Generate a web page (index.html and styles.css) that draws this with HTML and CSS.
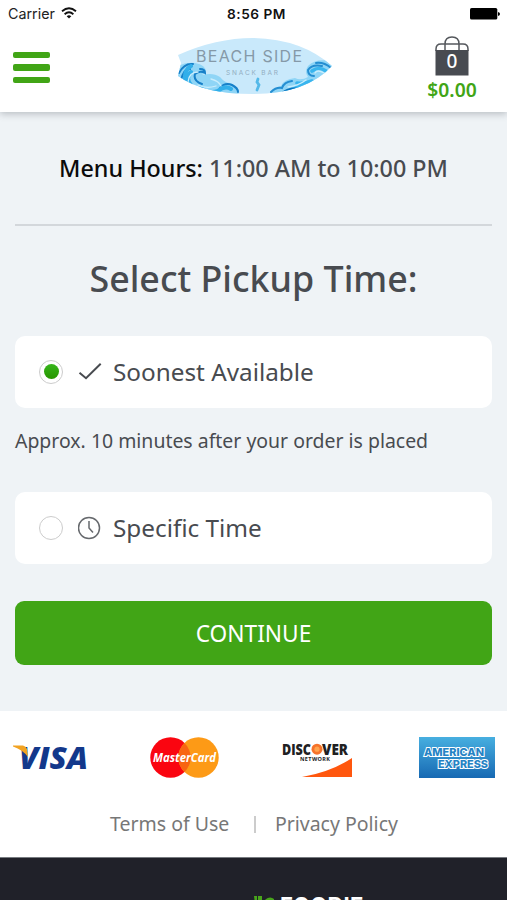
FILE: index.html
```html
<!DOCTYPE html>
<html lang="en">
<head>
<meta charset="utf-8">
<meta name="viewport" content="width=device-width, initial-scale=1">
<title>Beach Side Snack Bar</title>
<link rel="stylesheet" href="styles.css">
</head>
<body>
<div class="screen">
  <header class="header">
    <div class="status">
      <div class="carrier">
        <span>Carrier</span>
        <svg width="16" height="12" viewBox="0 0 16 12" fill="none" stroke="#111" stroke-width="1.8"><path d="M1 4.2Q8-1.8 15 4.2M3.6 7.2Q8 3.4 12.4 7.2"/><path d="M5.7 9.2Q8 7.4 10.3 9.2L8 11.6Z" fill="#111" stroke="none"/></svg>
      </div>
      <div class="clock">8:56 PM</div>
      <svg class="battery" width="30" height="12" viewBox="0 0 30 12"><rect width="27.3" height="11.6" rx="1.6"/><path d="M28 4Q30 4.3 30 6T28 8Z"/></svg>
    </div>
    <div class="bar">
      <div class="menu"><i></i><i></i><i></i></div>
      <svg class="logo" width="154" height="57" viewBox="0 0 154 57">
        <defs><clipPath id="board"><path d="M0 17Q38 0 75 0Q124 1 154 28Q128 56 75 56Q25 56 0 38L3 25Z"/></clipPath></defs>
        <g clip-path="url(#board)">
          <rect width="154" height="57" fill="#c9e9fb"/>
          <path d="M0 28Q8 24 17 25Q28 27 28 34L24 37Q35 34 42 39Q47 45 52 45Q58 46 61 57H0Z" fill="#8fd5f6"/>
          <path d="M154 23Q137 20 130 28Q126 34 130 39Q123 43 117 40Q106 41 103 48Q97 49 91 57H154Z" fill="#8fd5f6"/>
          <g fill="none" stroke-linecap="round">
            <path d="M1 35Q6 25 15 26M3 42Q6 30 12 31M22 31Q27 31 27 35Q22 32 17 36Q15 43 24 46M42 50Q47 44 54 47Q60 50 60 54" stroke="#1780c9" stroke-width="2"/>
            <path d="M7 42Q6 32 13 28M13 47Q7 40 13 34M23 50Q31 56 40 53Q47 47 53 51" stroke="#32afea" stroke-width="4"/>
            <path d="M10 44Q11 34 20 34M20 47Q28 51 38 48M33 41Q41 43 43 48" stroke="#c9edfc" stroke-width="1.3"/>
            <path d="M153 30Q146 24 138 25M144 28Q134 26 130 32Q130 38 136 38M114 43Q106 44 104 50Q98 49 93 54" stroke="#248ed2" stroke-width="2"/>
            <path d="M148 33Q141 28 134 33M146 39Q139 47 130 46Q120 49 108 54M119 45Q127 46 134 43" stroke="#39b5ee" stroke-width="3.6"/>
            <path d="M146 35Q139 31 137 35M128 42Q120 48 110 49" stroke="#c9edfc" stroke-width="1.3"/>
            <path d="M80 41L79 44L81 47L79 52" stroke="#53b9e9" stroke-width="2.8"/>
            <path d="M4 43Q12 50 23 52M151 35Q148 43 139 47M122 51Q111 49 104 55" stroke="#0873bd" stroke-width="1.8"/>
          </g>
        </g>
        <text x="18" y="24" class="logo-name" textLength="106">BEACH SIDE</text>
        <text x="48" y="36.5" class="logo-sub" textLength="52">SNACK BAR</text>
      </svg>
      <div class="cart">
        <div class="bag">
          <svg width="34" height="40" viewBox="0 0 34 40"><path d="M1 15V13Q1 8 6 8H28Q33 8 33 13V15M10 14V8Q10 1 17 1T24 8V14" fill="none" stroke="#55585d" stroke-width="1.5"/><path d="M.5 14H33.5V39.5H.5Z" fill="#484b51"/></svg>
          <span class="count">0</span>
        </div>
        <div class="total">$0.00</div>
      </div>
    </div>
  </header>

  <main class="main">
    <p class="hours"><b>Menu Hours:</b> 11:00 AM to 10:00 PM</p>
    <h1>Select Pickup Time:</h1>
    <div class="option">
      <span class="radio checked"></span>
      <svg class="icon" width="24" height="24" viewBox="0 0 24 24" fill="none" stroke="#484b50" stroke-width="2"><path d="M1.5 12.8L8 18.2L22.7 3.8"/></svg>
      <span>Soonest Available</span>
    </div>
    <p class="note">Approx. 10 minutes after your order is placed</p>
    <div class="option">
      <span class="radio"></span>
      <svg class="icon" width="24" height="24" viewBox="0 0 24 24" fill="none" stroke="#66696d" stroke-width="1.5"><circle cx="11" cy="12" r="10.5"/><path d="M11 5V12L15 16.5"/></svg>
      <span>Specific Time</span>
    </div>
    <button class="continue">CONTINUE</button>
  </main>

  <section class="payments">
    <div class="cards">
      <svg width="76" height="42" viewBox="0 0 76 42">
        <text x="6" y="31.5" class="visa" textLength="69" lengthAdjust="spacingAndGlyphs">VISA</text>
        <path d="M0 8.5H10Q13 9 14 12L15 20Q10 13 0 9.5Z" fill="#f2a322"/>
      </svg>
      <svg width="70" height="42" viewBox="0 0 70 42">
        <circle cx="20.5" cy="20.5" r="20.2" fill="#fa0510"/><circle cx="48.5" cy="20.5" r="20.2" fill="#fd9a16"/>
        <path d="M34.5 6A20.2 20.2 0 0 1 34.5 35A20.2 20.2 0 0 1 34.5 6Z" fill="#f86412"/>
        <text x="3" y="25" class="mastercard" textLength="63" lengthAdjust="spacingAndGlyphs">MasterCard</text>
      </svg>
      <svg width="71" height="42" viewBox="0 0 71 42">
        <circle cx="35" cy="12.2" r="5.5" fill="#f5732b"/><circle cx="35" cy="12.2" r="2.6" fill="#ffa34e"/>
        <text x="0" y="17.5" class="discover" textLength="29" lengthAdjust="spacingAndGlyphs">DISC</text>
        <text x="40" y="17.5" class="discover" textLength="26" lengthAdjust="spacingAndGlyphs">VER</text>
        <text x="18" y="24" class="network" textLength="30">NETWORK</text>
        <path d="M20 40Q49 35 70 21V40Z" fill="#ff570e"/>
      </svg>
      <svg width="76" height="42" viewBox="0 0 76 42">
        <defs><linearGradient id="blue" x2="0" y2="1"><stop stop-color="#47afe0"/><stop offset="1" stop-color="#1769b3"/></linearGradient></defs>
        <rect width="76" height="41" fill="url(#blue)"/>
        <text x="5" y="18.5" class="amex" textLength="60" lengthAdjust="spacingAndGlyphs">AMERICAN</text>
        <text x="19" y="31" class="amex" textLength="50" lengthAdjust="spacingAndGlyphs">EXPRESS</text>
      </svg>
    </div>
    <nav class="links"><span>Terms of Use</span><i></i><span>Privacy Policy</span></nav>
  </section>

  <footer class="footer">
    <svg width="23" height="20" viewBox="0 0 23 20" fill="#48a51b"><path d="M0 0H3V5Q3 8 1 8ZM4 0H8V9H4ZM10 7A6 6 0 0 1 20 3V18H10Z"/></svg>
    <span>FOODIE</span>
  </footer>
</div>
</body>
</html>
```
FILE: styles.css
```css
* { box-sizing: border-box; }
body { margin: 0; font-family: "Noto Sans", sans-serif; color: #484b50; }
p, h1 { margin: 0; }
.screen { width: 507px; height: 900px; overflow: hidden; background: #eff3f6; }

.header { height: 112px; background: #fff; position: relative; box-shadow: 0 2px 7px rgba(60, 65, 75, .3); }
.status { height: 28px; padding: 0 7px 0 8px; display: grid; grid-template-columns: 1fr auto 1fr; align-items: center; font: 14.3px/28px Inter, sans-serif; color: #222; }
.carrier { display: flex; align-items: center; gap: 6px; }
.carrier svg { margin-top: -3px; }
.clock { font-size: 13.7px; font-weight: 600; letter-spacing: .5px; padding-left: 5px; color: #111; }
.battery { justify-self: end; margin-top: -1px; }
.bar { height: 84px; padding: 8px 30px 0 13px; display: grid; grid-template-columns: 165px 1fr 50px; align-items: start; }
.menu { display: grid; gap: 6px; padding-top: 16px; width: 37px; }
.menu i { height: 6.4px; border-radius: 2px; background: #41a516; }
.logo { margin-top: 2px; }
.logo-name { font: 16px Inter, sans-serif; fill: #8599a8; }
.logo-sub { font: 6.5px Inter, sans-serif; fill: #92adbf; }
.cart { display: flex; flex-direction: column; align-items: center; }
.bag { display: grid; width: 34px; height: 40px; }
.bag svg, .count { grid-area: 1 / 1; }
.count { text-align: center; color: #fff; font-size: 19px; font-weight: 500; line-height: 50px; }
.total { color: #41a516; font-size: 19.3px; font-weight: 600; line-height: 28px; }

.main { height: 599px; padding: 0 15px; }
.hours { height: 114px; padding-top: 40px; border-bottom: 2px solid #d3d7db; text-align: center; font-size: 23.3px; font-weight: 500; line-height: 32px; }
.hours b { color: #0b0b0b; font-weight: 500; }
h1 { height: 110px; padding-top: 28px; text-align: center; font-size: 35.8px; line-height: 48px; font-weight: 500; }
.option { height: 72px; border-radius: 10px; background: #fff; display: flex; align-items: center; padding: 0 0 1px 24px; font-size: 24.3px; }
.radio { width: 24px; height: 24px; border: 1.5px solid #ccc; border-radius: 50%; margin-right: 15px; display: grid; place-items: center; }
.radio.checked::before { content: ""; width: 15px; height: 15px; border-radius: 50%; background: linear-gradient(#36b51b, #289600); }
.icon { margin-right: 11px; }
.note { height: 84px; padding-top: 19px; font-size: 19.45px; line-height: 28px; }
.continue { display: block; width: 100%; height: 64px; margin-top: 37px; border: 0; border-radius: 9px; background: #41a516; color: #fff; font: 22.7px "Noto Sans", sans-serif; }

.payments { height: 146px; background: #fff; padding: 26px 12px 0 13px; }
.cards { height: 42px; display: grid; grid-template-columns: 137px 132px 137px 76px; }
.cards svg { overflow: visible; }
.visa { font: italic 800 30px "Open Sans", sans-serif; fill: #13388b; }
.mastercard { font: italic 700 13px "Open Sans", sans-serif; fill: #fff; }
.discover { font: 800 15.5px "Open Sans", sans-serif; fill: #202022; }
.network { font: 700 5.5px "Open Sans", sans-serif; fill: #202022; }
.amex { font: 800 11px Inter, sans-serif; fill: #2583c5; stroke: #fff; stroke-width: 2px; paint-order: stroke; }
.links { display: flex; justify-content: center; align-items: center; margin-top: 30px; height: 28px; font-size: 19.5px; color: #777; }
.links i { width: 1.5px; height: 17px; background: #ccc; margin: 2px 19px 0 25px; }

.footer { height: 43px; background: #202129; border-top: 1px solid #777b80; display: flex; align-items: flex-start; padding: 38px 0 0 254px; overflow: hidden; color: #fff; font: 700 22px/24px Inter, sans-serif; }
.footer span { margin: -3px 0 0 3px; letter-spacing: .2px; }
```
